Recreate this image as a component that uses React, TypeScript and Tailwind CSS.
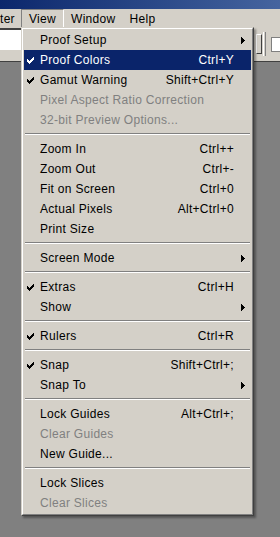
import React from "react";

type Item =
  | { sep: true }
  | {
      sep?: false;
      label: string;
      shortcut?: string;
      check?: boolean;
      sub?: boolean;
      disabled?: boolean;
      active?: boolean;
    };

const items: Item[] = [
  { label: "Proof Setup", sub: true },
  { label: "Proof Colors", shortcut: "Ctrl+Y", check: true, active: true },
  { label: "Gamut Warning", shortcut: "Shift+Ctrl+Y", check: true },
  { label: "Pixel Aspect Ratio Correction", disabled: true },
  { label: "32-bit Preview Options...", disabled: true },
  { sep: true },
  { label: "Zoom In", shortcut: "Ctrl++" },
  { label: "Zoom Out", shortcut: "Ctrl+-" },
  { label: "Fit on Screen", shortcut: "Ctrl+0" },
  { label: "Actual Pixels", shortcut: "Alt+Ctrl+0" },
  { label: "Print Size" },
  { sep: true },
  { label: "Screen Mode", sub: true },
  { sep: true },
  { label: "Extras", shortcut: "Ctrl+H", check: true },
  { label: "Show", sub: true },
  { sep: true },
  { label: "Rulers", shortcut: "Ctrl+R", check: true },
  { sep: true },
  { label: "Snap", shortcut: "Shift+Ctrl+;", check: true },
  { label: "Snap To", sub: true },
  { sep: true },
  { label: "Lock Guides", shortcut: "Alt+Ctrl+;" },
  { label: "Clear Guides", disabled: true },
  { label: "New Guide..." },
  { sep: true },
  { label: "Lock Slices" },
  { label: "Clear Slices", disabled: true },
];

function Check({ color }: { color: string }) {
  return (
    <svg width="7" height="7" viewBox="0 0 7 7" shapeRendering="crispEdges">
      <path
        fill={color}
        d="M6 0h1v3h-1zM5 1h1v3h-1zM4 2h1v3h-1zM3 3h1v3h-1zM2 4h1v3h-1zM1 3h1v3h-1zM0 2h1v3h-1z"
      />
    </svg>
  );
}

function Arrow({ color }: { color: string }) {
  return (
    <svg width="4" height="7" viewBox="0 0 4 7" shapeRendering="crispEdges">
      <path fill={color} d="M0 0h1v7h-1zM1 1h1v5h-1zM2 2h1v3h-1zM3 3h1v1h-1z" />
    </svg>
  );
}

export default function App() {
  return (
    <div
      className="relative w-[280px] h-[537px] overflow-hidden bg-[#808080] text-[12px] leading-none tracking-[0.3px] text-black"
      style={{ fontFamily: '"Liberation Sans", Arial, sans-serif' }}
    >
      {/* title bar */}
      <div className="h-[9px] bg-gradient-to-r from-[#0c276c] to-[#45649f]" />
      {/* menu bar */}
      <div className="h-[19px] bg-[#d4d0c8] flex items-stretch">
        <div className="w-[21px] flex items-center">ter</div>
        <div className="flex items-center px-[7px] border border-b-0 border-t-[#808080] border-l-[#808080] border-r-white">
          View
        </div>
        <div className="flex items-center px-[7px]">Window</div>
        <div className="flex items-center px-[7px]">Help</div>
      </div>
      {/* toolbar */}
      <div className="h-[34px] bg-[#d4d0c8] border-b border-[#404040] relative">
        <div className="absolute left-0 top-0 w-[21px] h-[22px] bg-white border-t-2 border-[#404040]" />
        <div className="absolute left-[256px] top-[6px] w-[6px] h-[20px] border border-[#404040] border-l-white border-t-white" />
        <div className="absolute left-[263px] top-[4px] w-[1px] h-[24px] bg-white" />
        <div className="absolute left-[265px] top-[4px] w-[1px] h-[24px] bg-[#808080]" />
        <div className="absolute left-[271px] top-[9px] w-[12px] h-[15px] bg-white border border-[#808080]" />
      </div>

      {/* dropdown menu */}
      <div className="absolute left-[21px] top-[27px] w-[233px] border border-t-[#d4d0c8] border-l-[#d4d0c8] border-r-[#404040] border-b-[#404040] bg-[#d4d0c8] shadow-[2px_2px_2px_rgba(0,0,0,0.35)]">
        <div className="border border-t-white border-l-white border-r-[#808080] border-b-[#808080] p-px flex flex-col">
          {items.map((it, i) => {
            if (it.sep) {
              return (
                <div key={i} className="h-[9px] flex flex-col pt-[3px] px-px">
                  <div className="h-px bg-[#808080]" />
                  <div className="h-px bg-white" />
                </div>
              );
            }
            const fg = it.active ? "#ffffff" : it.disabled ? "#808080" : "#000000";
            return (
              <div
                key={i}
                className={`h-[20px] flex items-center ${it.active ? "bg-[#0a246a] text-white" : ""} ${
                  it.disabled ? "text-[#808080]" : ""
                }`}
              >
                <div className="w-[16px] flex justify-start pl-[3px]">
                  {it.check ? <Check color={fg} /> : null}
                </div>
                <div className="flex-1 whitespace-nowrap">{it.label}</div>
                <div className="whitespace-nowrap">{it.shortcut ?? ""}</div>
                <div className="w-[17px] flex justify-end pr-[6px]">
                  {it.sub ? <Arrow color={fg} /> : null}
                </div>
              </div>
            );
          })}
        </div>
      </div>
    </div>
  );
}
